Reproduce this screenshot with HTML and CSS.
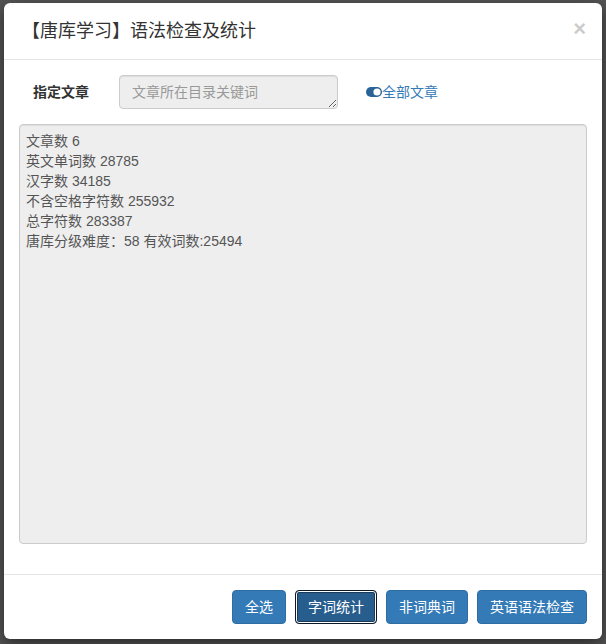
FILE: index.html
```html
<!DOCTYPE html>
<html lang="zh-CN">
<head>
<meta charset="utf-8">
<title>语法检查及统计</title>
<link rel="stylesheet" href="styles.css">
</head>
<body>
<div class="modal">
  <div class="modal-header">
    <h4 class="modal-title">【唐库学习】语法检查及统计</h4>
    <span class="close">×</span>
  </div>
  <div class="modal-body">
    <div class="form-row">
      <label class="form-label">指定文章</label>
      <textarea class="kw-input" placeholder="文章所在目录关键词" disabled></textarea>
      <a class="toggle-link"><svg class="toggle-icon" width="16" height="10" viewBox="0 0 16 10"><rect x="0" y="0" width="16" height="10" rx="5" fill="#2a6496"/><circle cx="11" cy="5" r="3.6" fill="#fff"/></svg>全部文章</a>
    </div>
    <div class="result-box">文章数 6
英文单词数 28785
汉字数 34185
不含空格字符数 255932
总字符数 283387
唐库分级难度：58 有效词数:25494</div>
  </div>
  <div class="modal-footer">
    <button class="btn">全选</button>
    <button class="btn btn-focus">字词统计</button>
    <button class="btn">非词典词</button>
    <button class="btn">英语语法检查</button>
  </div>
</div>
</body>
</html>
```
FILE: styles.css
```css
html, body {
  margin: 0;
  padding: 0;
}
body {
  width: 606px;
  height: 644px;
  overflow: hidden;
  background: #545454;
  font-family: "Liberation Sans", "Noto Sans CJK SC", sans-serif;
  font-size: 14px;
  line-height: 20px;
  color: #333;
  padding-top: 3px;
  box-sizing: border-box;
}
.modal {
  width: 598px;
  margin: 0 4px;
  background: #fff;
  border-radius: 6px;
  box-shadow: 0 5px 15px rgba(0,0,0,.5);
}
.modal-header {
  display: flex;
  align-items: center;
  justify-content: space-between;
  padding: 15px 15px 15px 18px;
  border-bottom: 1px solid #e5e5e5;
}
.modal-title {
  margin: 0;
  font-size: 18px;
  font-weight: normal;
  line-height: 26px;
  color: #333;
}
.close {
  font-size: 22px;
  font-weight: bold;
  color: #000;
  opacity: .2;
  line-height: 1;
  margin-right: 1px;
  margin-top: -4px;
}
.modal-body {
  padding: 15px;
}
.form-row {
  display: flex;
  align-items: center;
  height: 34px;
  margin-bottom: 15px;
}
.form-label {
  font-weight: bold;
  margin-left: 14px;
  width: 86px;
}
.kw-input {
  width: 219px;
  height: 34px;
  box-sizing: border-box;
  padding: 6px 12px;
  font-family: inherit;
  font-size: 14px;
  line-height: 20px;
  background: #eee;
  border: 1px solid #ccc;
  border-radius: 4px;
  box-shadow: inset 0 1px 1px rgba(0,0,0,.075);
  color: #555;
  resize: vertical;
  margin: 0;
}
.kw-input::placeholder {
  color: #999;
}
.toggle-link {
  margin-left: 28px;
  color: #337ab7;
  display: flex;
  align-items: center;
}
.toggle-icon {
  margin-right: 0;
}
.result-box {
  height: 420px;
  box-sizing: border-box;
  padding: 6px 6px;
  background: #eee;
  border: 1px solid #ccc;
  border-radius: 4px;
  box-shadow: inset 0 1px 1px rgba(0,0,0,.075);
  white-space: pre-line;
  color: #555;
  margin-bottom: 15px;
}
.modal-footer {
  display: flex;
  justify-content: flex-end;
  gap: 9px;
  padding: 15px;
  border-top: 1px solid #e5e5e5;
}
.btn {
  height: 34px;
  padding: 6px 12px;
  font-family: inherit;
  font-size: 14px;
  line-height: 20px;
  color: #fff;
  background: #337ab7;
  border: 1px solid #2e6da4;
  border-radius: 4px;
  margin: 0;
}
.btn-focus {
  background: #285e8e;
  border-color: #0b1a2a;
  box-shadow: inset 0 0 0 1px #fff, inset 0 0 0 2px #1b3a5a;
}
```
